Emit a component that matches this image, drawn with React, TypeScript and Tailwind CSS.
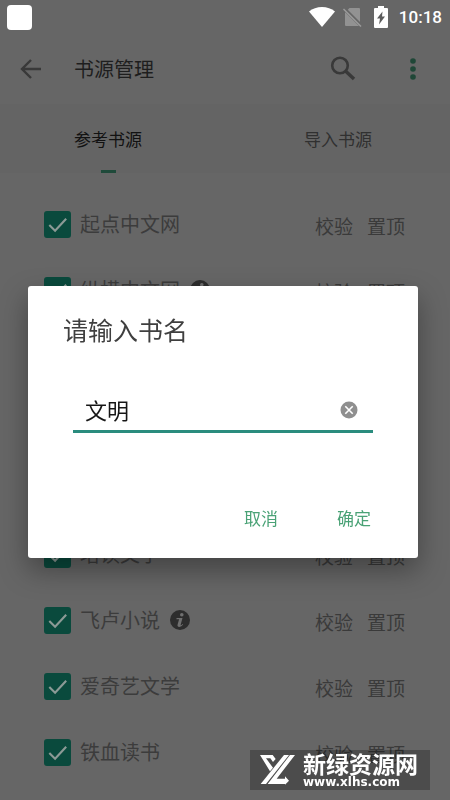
import { useState } from "react";

interface Source {
  name: string;
  info?: boolean;
}

const topSources: Source[] = [
  { name: "起点中文网" },
  { name: "纵横中文网", info: true },
];

const bottomSources: Source[] = [
  { name: "塔读文学" },
  { name: "飞卢小说", info: true },
  { name: "爱奇艺文学" },
  { name: "铁血读书" },
];

const StatusBar = () => (
  <div className="flex h-[34px] items-center justify-between pl-[7px] pr-2">
    <div className="h-[25px] w-[25px] rounded bg-white" />
    <div className="flex items-center">
      <svg width="26" height="20" viewBox="0 0 26 20" className="mr-2">
        <path d="M13 20 0 4.5C3.5 1.500 8 0 13 0s9.500 1.500 13 4.500z" fill="#fff" />
      </svg>
      <svg width="19" height="20" viewBox="0 0 19 20" className="mr-3">
        <path d="M6.500 1H16a1 1 0 0 1 1 1v16a1 1 0 0 1-1 1H3a1 1 0 0 1-1-1V5.500z" fill="#929292" />
        <path d="M0 .5 18 18.500" stroke="#666" strokeWidth="3.500" />
        <path d="M.5 2 18 19.500" stroke="#9c9c9c" strokeWidth="1.400" />
      </svg>
      <svg width="14" height="22" viewBox="0 0 14 22" className="mr-[11px]">
        <path d="M4 0h6v2h3a1 1 0 0 1 1 1v18a1 1 0 0 1-1 1H1a1 1 0 0 1-1-1V3a1 1 0 0 1 1-1h3z" fill="#fff" />
        <path d="M8.500 5.500 3 12.500h3L5 18.500l6-8H8z" fill="#5c5c5c" />
      </svg>
      <span className="font-['Roboto',sans-serif] text-[17px] font-medium leading-5 text-white">
        10:18
      </span>
    </div>
  </div>
);

const Header = () => (
  <header className="flex h-[70px] items-center pl-[15px] pr-[21px]">
    <button aria-label="返回" className="mr-[27px]">
      <svg width="32" height="32" viewBox="0 0 32 32" fill="none" stroke="#393939" strokeWidth="2.400">
        <path d="M26 16H7.500M16 7 7 16l9 9" />
      </svg>
    </button>
    <h1 className="flex-1 text-xl text-[#1e1e1e]">书源管理</h1>
    <button aria-label="搜索" className="mr-[38px]">
      <svg width="32" height="32" viewBox="0 0 32 32" fill="none" stroke="#393939">
        <circle cx="13" cy="12.500" r="7.800" strokeWidth="2.600" />
        <path d="m18.500 18 8.500 8" strokeWidth="3.400" />
      </svg>
    </button>
    <button aria-label="更多">
      <svg width="32" height="32" viewBox="0 0 32 32" fill="#1f4737">
        <circle cx="16" cy="8" r="2.800" />
        <circle cx="16" cy="16" r="2.800" />
        <circle cx="16" cy="24" r="2.800" />
      </svg>
    </button>
  </header>
);

const Tabs = () => (
  <nav className="flex h-[69px] justify-between bg-[#646464] pl-[74px] pr-[78px] text-[17px]">
    <button className="relative text-[#121212]">
      参考书源
      <span className="absolute inset-x-0 bottom-0 mx-auto h-[3px] w-[15px] bg-[#1f4a3a]" />
    </button>
    <button className="text-[#303030]">导入书源</button>
  </nav>
);

const InfoIcon = () => (
  <svg width="20" height="20" viewBox="0 0 20 20" className="ml-[10px]">
    <circle cx="10" cy="10" r="10" fill="#2d2d2d" />
    <circle cx="11.800" cy="4.700" r="1.800" fill="#707070" />
    <path d="M6.500 8h6l-2 7.200q1 .2 2-1.200l.7.6q-1.800 2.400-3.900 2.400-2.300 0-1.700-2.400l1.500-5.400H6.500z" fill="#707070" />
  </svg>
);

const SourceRow = ({ name, info }: Source) => (
  <li className="flex h-[66px] items-center pl-11 pr-[45px]">
    <label className="flex flex-1 items-center text-xl text-[#3c3c3c]">
      <span className="mr-[9px] grid">
        <input
          type="checkbox"
          defaultChecked
          className="peer col-start-1 row-start-1 h-[27px] w-[27px] appearance-none rounded-[3px] border-2 border-[#0a4a3d] checked:bg-[#0a4a3d]"
        />
        <svg
          viewBox="0 0 28 28"
          className="pointer-events-none invisible col-start-1 row-start-1 h-[27px] w-[27px] peer-checked:visible"
          fill="none"
          stroke="#8c9a96"
          strokeWidth="2.200"
        >
          <path d="m5.500 14.500 6 6L23 8" />
        </svg>
      </span>
      {name}
      {info && <InfoIcon />}
    </label>
    <div className="flex gap-[14px] pt-1 text-[19px] text-[#3a3a3a]">
      <button>校验</button>
      <button>置顶</button>
    </div>
  </li>
);

const NameDialog = () => {
  const [name, setName] = useState("文明");

  return (
    <div className="fixed inset-0 flex items-center pl-7 pr-8 pt-11">
      <div
        role="dialog"
        aria-labelledby="dialog-title"
        className="flex-1 rounded-[3px] bg-white pb-5 pt-[27px] shadow-[0_12px_28px_rgba(0,0,0,0.35)]"
      >
        <h2 id="dialog-title" className="pl-[35px] text-[25px] leading-8 text-[#3f3f3f]">
          请输入书名
        </h2>
        <div className="mx-[45px] mt-12 flex h-10 items-center border-b-[3px] border-[#2a8c7e] pb-1 pl-3 pr-[15px]">
          <input
            aria-labelledby="dialog-title"
            value={name}
            onChange={(e) => setName(e.target.value)}
            className="min-w-0 flex-1 text-[22px] text-[#161616] outline-none"
          />
          <button aria-label="清除" onClick={() => setName("")}>
            <svg width="18" height="18" viewBox="0 0 18 18">
              <circle cx="9" cy="9" r="8.500" fill="#8f8f8f" />
              <path d="m5.300 5.300 7.400 7.400m0-7.400-7.400 7.400" stroke="#fff" strokeWidth="1.600" />
            </svg>
          </button>
        </div>
        <div className="mt-[65px] flex h-10 justify-end gap-[27px] pr-[31px] text-[17px] text-[#4aa276]">
          <button className="px-4">取消</button>
          <button className="px-4">确定</button>
        </div>
      </div>
    </div>
  );
};

const Watermark = () => (
  <div className="pointer-events-none fixed bottom-[10px] right-5 flex h-10 w-[180px] items-center bg-black/25 pl-[10px] text-white">
    <svg width="35" height="30" viewBox="0 0 105 90" fill="#fff" className="mr-2">
      <path d="M0 0h38l9 12-8 9-8-11H18l21 28-9 11z" />
      <path d="M72 0h15L18 87H2z" />
      <path d="M90 0h15L50 71h25v-7l12 13-12 12v-2H23z" />
    </svg>
    <div>
      <p className="text-[23px] font-bold leading-6">新绿资源网</p>
      <p className="font-['DejaVu_Sans',sans-serif] text-xs font-bold leading-[14px]">www.xlhs.com</p>
    </div>
  </div>
);

const App = () => (
  <div className="min-h-screen overflow-hidden bg-[#666] font-['Noto_Sans_CJK_SC',sans-serif]">
    <StatusBar />
    <Header />
    <Tabs />
    <ul className="pt-[18px]">
      {topSources.map((source) => (
        <SourceRow key={source.name} {...source} />
      ))}
    </ul>
    <ul className="pt-[198px]">
      {bottomSources.map((source) => (
        <SourceRow key={source.name} {...source} />
      ))}
    </ul>
    <NameDialog />
    <Watermark />
  </div>
);

export default App;
